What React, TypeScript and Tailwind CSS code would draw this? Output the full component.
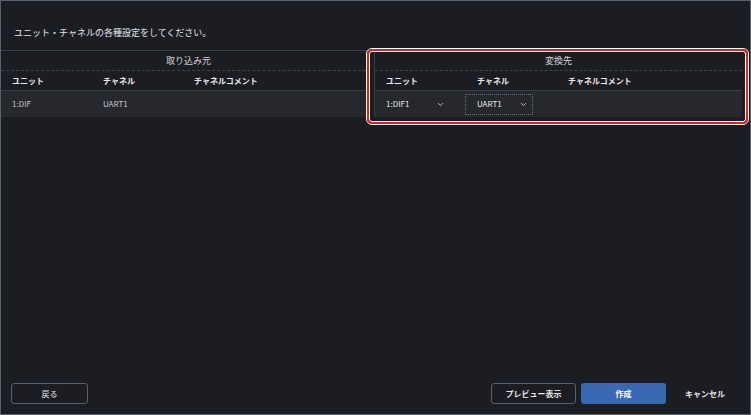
import { ChevronDown } from 'lucide-react';

const font = { fontFamily: '"Noto Sans CJK JP", "Noto Sans", sans-serif' };

function HeaderCells() {
  return (
    <div className="flex h-[20px] items-center border-b border-[#3a3d44] text-[8px] font-bold text-[#e8e8ea]">
      <div className="w-[91px] pl-[11px]">ユニット</div>
      <div className="w-[91px] pl-[11px]">チャネル</div>
      <div className="pl-[11px]">チャネルコメント</div>
    </div>
  );
}

function GroupTitle({ label, className }: { label: string; className?: string }) {
  return (
    <div
      className={
        'flex h-[20px] items-center justify-center border-b border-dashed border-[#3f4249] text-[9px] text-[#d4d5d8] ' +
        (className ?? '')
      }
    >
      {label}
    </div>
  );
}

export default function App() {
  return (
    <div
      className="relative box-border flex h-[415px] w-[751px] flex-col border border-[#5d6068] bg-[#1b1d23]"
      style={font}
    >
      <div className="h-[49px] pl-[13px] pt-[26px] text-[9px] leading-[12px] text-[#e4e5e8]">
        ユニット・チャネルの各種設定をしてください。
      </div>

      <div className="flex border-t border-[#3a3d44]">
        {/* 取り込み元 */}
        <div className="w-[366px] border-r border-[#3a3d44]">
          <GroupTitle label="取り込み元" className="pl-[10px]" />
          <HeaderCells />
          <div className="flex h-[26px] items-center bg-[#26282e] text-[8px] text-[#c6c7cb]">
            <div className="w-[91px] pl-[11px]">1:DIF</div>
            <div className="w-[91px] pl-[11px]">UART1</div>
          </div>
        </div>

        {/* 変換先 */}
        <div className="ml-[7px] w-[368px] border-l border-[#3a3d44]">
          <GroupTitle label="変換先" />
          <HeaderCells />
          <div className="flex h-[26px] items-center bg-[#26282e] text-[8px] text-[#e8e8ea]">
            <div className="flex w-[90px] items-center justify-between pl-[11px] pr-[20px]">
              <span>1:DIF1</span>
              <ChevronDown className="h-[9px] w-[9px]" strokeWidth={2} />
            </div>
            <div className="flex h-[21px] w-[68px] items-center justify-between border border-dotted border-[#6a6d74] pl-[11px] pr-[4px]">
              <span>UART1</span>
              <ChevronDown className="h-[9px] w-[9px]" strokeWidth={2} />
            </div>
          </div>
        </div>
      </div>

      {/* highlight */}
      <div className="pointer-events-none absolute left-[365px] top-[47px] h-[77px] w-[383px] rounded-[6px] border border-white">
        <div className="h-full w-full rounded-[5px] border-2 border-[#e0201b]">
          <div className="h-full w-full rounded-[3px] border border-white" />
        </div>
      </div>

      <div className="flex-1" />

      <div className="flex items-center pb-[10px] pl-[10px] pr-[9px]">
        <button className="h-[21px] w-[77px] rounded-[3px] border border-[#5b5e66] text-[8px] text-[#e4e5e8]">
          戻る
        </button>
        <div className="flex-1" />
        <button className="h-[21px] w-[85px] rounded-[3px] border border-[#5b5e66] text-[8px] font-bold text-[#e4e5e8]">
          プレビュー表示
        </button>
        <button className="ml-[5px] h-[21px] w-[85px] rounded-[3px] bg-[#3a69b4] text-[8px] font-bold text-white">
          作成
        </button>
        <button className="ml-[3px] h-[21px] w-[72px] text-[8px] font-bold text-[#e4e5e8]">
          キャンセル
        </button>
      </div>
    </div>
  );
}
